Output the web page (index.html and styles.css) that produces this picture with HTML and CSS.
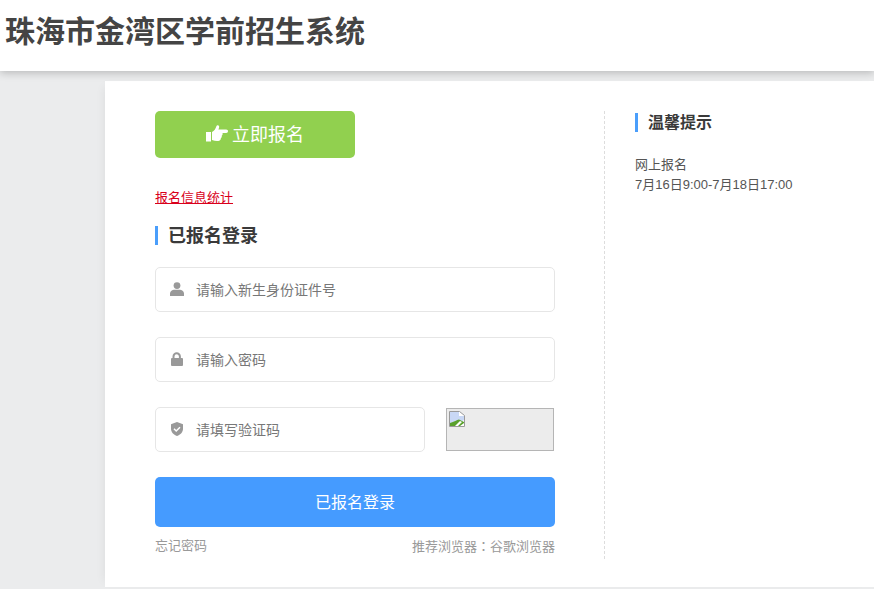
FILE: index.html
```html
<!DOCTYPE html>
<html lang="zh-CN">
<head>
<meta charset="utf-8">
<title>珠海市金湾区学前招生系统</title>
<link rel="stylesheet" href="styles.css">
</head>
<body>
<header class="top"><h1 class="title">珠海市金湾区学前招生系统</h1></header>
<main class="card">
  <section class="left">
    <a class="apply" href="#">
      <svg class="hand" viewBox="0 0 22 17" width="22" height="17"><path fill="#fff" d="M0 7h5v9.500H0zM6 7c2.300-1 3.500-3 4.500-6 .5-1.200 2.800-.8 2.700 1.100-.1 1-.4 1.700-.8 2.400h7.800c2.400 0 2.400 3.400 0 3.400h-3.700c.4 1.300 0 2.300-.8 2.800.3 1.100-.1 2-.9 2.500.2 1.100-.4 2.200-1.500 2.500-1.800.5-4.500.4-7.300-.7z"/></svg>
      <span>立即报名</span>
    </a>
    <a class="stats" href="#">报名信息统计</a>
    <h2 class="heading login-heading">已报名登录</h2>
    <div class="field">
      <svg class="ico" viewBox="0 0 14 14" width="14" height="14"><circle cx="7" cy="3.600" r="3.400" fill="#999"/><path fill="#999" d="M0 14v-2.500C0 9.200 2.500 7.800 4.500 7.800h5c2 0 4.500 1.400 4.500 3.700V14z"/></svg>
      <span class="ph">请输入新生身份证件号</span>
    </div>
    <div class="field">
      <svg class="ico" viewBox="0 0 14 14" width="14" height="14"><path fill="none" stroke="#999" stroke-width="2" d="M3.500 7V4.500a3.200 3.200 0 0 1 6.400 0V7"/><rect x="1" y="6" width="12" height="8" rx="1" fill="#999"/></svg>
      <span class="ph">请输入密码</span>
    </div>
    <div class="captcha-row">
      <div class="field short">
        <svg class="ico" viewBox="0 0 14 14" width="14" height="14"><path fill="#999" d="M7 0l6 2.200v4.600c0 3.300-2.500 6-6 7.200-3.500-1.200-6-3.900-6-7.200V2.200z"/><path fill="none" stroke="#fff" stroke-width="1.500" d="M4 6.800l2.200 2.200L10 5.200"/></svg>
        <span class="ph">请填写验证码</span>
      </div>
      <div class="captcha">
        <svg class="broken" viewBox="0 0 16 16" width="16" height="16"><path fill="#fff" stroke="#9a9a9a" d="M.5.500h10l5 4v11H.5z"/><path fill="#c9d8f5" d="M1 1h9v4h5v4L8 13H1z"/><path fill="#5aa02c" d="M1 15v-3c4-1 7-3 9-3.500L15 11v1l-4 3z"/><path fill="#fff" d="M6 15l5-5 2 1-4 4z"/></svg>
      </div>
    </div>
    <button class="login" type="button">已报名登录</button>
    <div class="links"><span>忘记密码</span><span>推荐浏览器<span class="colon" lang="zh-TW">：</span>谷歌浏览器</span></div>
  </section>
  <aside class="tips">
    <h2 class="heading tips-heading">温馨提示</h2>
    <p class="tips-text">网上报名<br>7月16日9:00-7月18日17:00</p>
  </aside>
</main>
</body>
</html>
```
FILE: styles.css
```css
* { box-sizing: border-box; }
html, body { margin: 0; height: 589px; overflow: hidden; }
body {
  background: #ebeced;
  font-family: "Liberation Sans", "Noto Sans CJK SC", sans-serif;
  color: #444;
}
.top {
  height: 71px;
  background: #fff;
  box-shadow: 0 2px 8px rgba(0,0,0,.22);
  position: relative;
  padding: 13px 0 0 5px;
}
.title {
  margin: 0;
  font-size: 30px;
  line-height: 38px;
  font-weight: 700;
  color: #444;
}
.card {
  margin: 10px 0 0 105px;
  height: 506px;
  background: #fff;
  display: flex;
  align-items: flex-start;
  padding: 30px 0 0 50px;
  box-shadow: -6px 0 10px -6px rgba(0,0,0,.07);
}
.left {
  width: 450px;
  height: 448px;
  padding-right: 49px;
  border-right: 1px dashed #ddd;
}
.apply {
  display: flex;
  align-items: center;
  justify-content: center;
  gap: 4px;
  width: 200px;
  height: 47px;
  padding-bottom: 3px;
  background: #91d04f;
  border-radius: 5px;
  color: #fff;
  font-size: 18px;
  text-decoration: none;
}
.stats {
  display: block;
  width: max-content;
  margin-top: 31px;
  font-size: 13px;
  line-height: 18px;
  color: #d9001b;
  text-decoration: underline;
}
.heading {
  margin: 0;
  border-left: 3px solid #4a9efb;
  font-size: 18px;
  line-height: 19px;
  font-weight: 700;
  color: #3a3a3a;
  padding-left: 10px;
}
.login-heading { margin-top: 19px; padding-top: 1px; height: 19px; line-height: 18px; }
.field {
  display: flex;
  align-items: center;
  height: 45px;
  margin-top: 22px;
  padding: 0 0 1px 14px;
  border: 1px solid #e6e6e6;
  border-radius: 5px;
  background: #fff;
}
.login-heading + .field { margin-top: 22px; }
.field + .field { margin-top: 25px; }
.ico { flex: none; }
.ph {
  margin-left: 12px;
  font-size: 14px;
  color: #777;
}
.captcha-row {
  display: flex;
  justify-content: space-between;
  margin-top: 25px;
}
.field.short { width: 270px; margin-top: 0; }
.captcha {
  width: 108px;
  height: 43px;
  margin: 1px 1px 0 0;
  background: #ececec;
  border: 1px solid #b5b5b5;
  padding: 2px;
  line-height: 0;
}
.login {
  display: block;
  width: 400px;
  height: 50px;
  margin-top: 25px;
  padding-bottom: 4px;
  border: 0;
  border-radius: 5px;
  background: #459bff;
  color: #fff;
  font: 16px "Liberation Sans", "Noto Sans CJK SC", sans-serif;
}
.links {
  display: flex;
  justify-content: space-between;
  margin-top: 10px;
  font-size: 13px;
  line-height: 18px;
  color: #999;
}
.colon { font-family: "Noto Sans CJK TC", sans-serif; }
.tips { padding: 2px 0 0 30px; }
.tips-heading { font-size: 16px; }
.tips-text {
  margin: 23px 0 0;
  font-size: 13px;
  line-height: 20px;
  color: #555;
}
```
